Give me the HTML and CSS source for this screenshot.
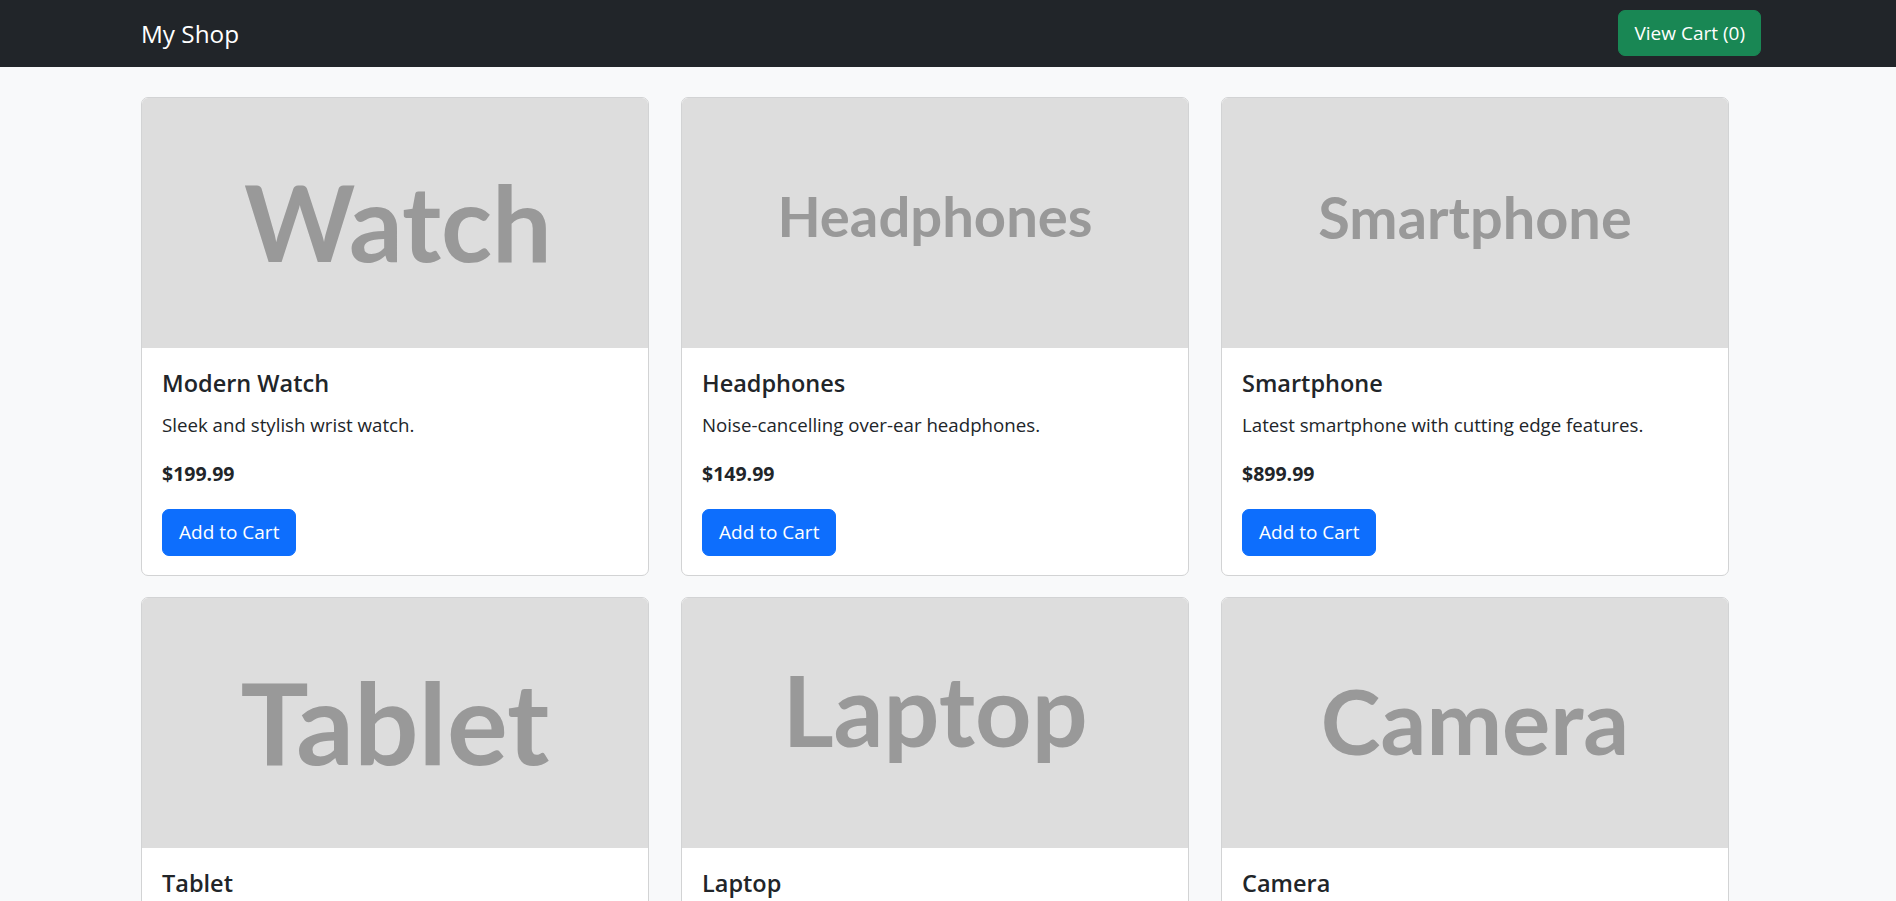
FILE: index.html
```html
<!DOCTYPE html>
<html lang="en">
<head>
<meta charset="utf-8">
<title>My Shop</title>
<link rel="stylesheet" href="styles.css">
</head>
<body>
<nav class="navbar">
  <div class="nav-inner">
    <a class="brand" href="#">My Shop</a>
    <button class="btn btn-cart">View Cart (0)</button>
  </div>
</nav>
<main class="shop">
  <div class="card">
    <div class="thumb"><span class="ph ph-watch">Watch</span></div>
    <div class="card-body">
      <h5 class="card-title">Modern Watch</h5>
      <p class="card-text">Sleek and stylish wrist watch.</p>
      <p class="price">$199.99</p>
      <button class="btn btn-add">Add to Cart</button>
    </div>
  </div>
  <div class="card">
    <div class="thumb"><span class="ph ph-headphones">Headphones</span></div>
    <div class="card-body">
      <h5 class="card-title">Headphones</h5>
      <p class="card-text">Noise-cancelling over-ear headphones.</p>
      <p class="price">$149.99</p>
      <button class="btn btn-add">Add to Cart</button>
    </div>
  </div>
  <div class="card">
    <div class="thumb"><span class="ph ph-smartphone">Smartphone</span></div>
    <div class="card-body">
      <h5 class="card-title">Smartphone</h5>
      <p class="card-text">Latest smartphone with cutting edge features.</p>
      <p class="price">$899.99</p>
      <button class="btn btn-add">Add to Cart</button>
    </div>
  </div>
  <div class="card">
    <div class="thumb"><span class="ph ph-tablet">Tablet</span></div>
    <div class="card-body">
      <h5 class="card-title">Tablet</h5>
      <p class="card-text">Portable tablet for work and play.</p>
      <p class="price">$499.99</p>
      <button class="btn btn-add">Add to Cart</button>
    </div>
  </div>
  <div class="card">
    <div class="thumb"><span class="ph ph-laptop">Laptop</span></div>
    <div class="card-body">
      <h5 class="card-title">Laptop</h5>
      <p class="card-text">Powerful laptop for everyday tasks.</p>
      <p class="price">$1299.99</p>
      <button class="btn btn-add">Add to Cart</button>
    </div>
  </div>
  <div class="card">
    <div class="thumb"><span class="ph ph-camera">Camera</span></div>
    <div class="card-body">
      <h5 class="card-title">Camera</h5>
      <p class="card-text">High resolution digital camera.</p>
      <p class="price">$649.99</p>
      <button class="btn btn-add">Add to Cart</button>
    </div>
  </div>
</main>
</body>
</html>
```
FILE: styles.css
```css
* { box-sizing: border-box; }

body {
  margin: 0;
  background: #f8f9fa;
  color: #212529;
  font-family: "Open Sans", "Noto Sans", sans-serif;
  font-size: 18.7px;
}

.navbar {
  background: #212529;
  height: 67px;
}

.nav-inner {
  height: 100%;
  display: flex;
  align-items: center;
  justify-content: space-between;
  padding: 0 135px 0 141px;
}

.brand {
  color: #fff;
  text-decoration: none;
  font-size: 24.3px;
  line-height: 30px;
}

.btn {
  font-family: inherit;
  border: 1px solid transparent;
  border-radius: 7px;
  color: #fff;
  font-size: 19px;
  line-height: 29px;
  cursor: pointer;
}

.btn-cart {
  background: #198754;
  border-color: #198754;
  height: 46px;
  padding: 0 15px;
  margin-top: -1px;
}

.shop {
  display: grid;
  grid-template-columns: repeat(3, 508px);
  column-gap: 32px;
  row-gap: 21px;
  padding: 30px 0 0 141px;
}

.card {
  background: #fff;
  border: 1px solid #d2d3d4;
  border-radius: 7px;
  overflow: hidden;
}

.thumb {
  height: 250px;
  background: #dddddd;
  display: flex;
  align-items: center;
  justify-content: center;
}

.ph {
  font-family: "Lato", sans-serif;
  font-weight: 700;
  color: #999999;
  line-height: 1;
}

.ph-watch { font-size: 106px; margin: 0 0 4px 6px; }
.ph-headphones { font-size: 56.2px; margin-bottom: 13px; }
.ph-smartphone { font-size: 57.7px; margin-bottom: 13px; }
.ph-tablet { font-size: 113.8px; margin-bottom: 2px; }
.ph-laptop { font-size: 98.5px; margin-bottom: 28px; }
.ph-camera { font-size: 90.3px; margin-bottom: 5px; }

.card-body {
  padding: 19px 20px 19px 20px;
}

.card-title {
  margin: 2px 0 0;
  font-size: 23.5px;
  font-weight: 600;
  line-height: 29px;
}

.card-text {
  margin: 12px 0 0;
  line-height: 29px;
}

.price {
  margin: 20px 0 0;
  font-size: 19.5px;
  font-weight: 700;
  line-height: 29px;
}

.btn-add {
  display: block;
  margin-top: 21px;
  background: #0d6efd;
  border-color: #0d6efd;
  height: 47px;
  padding: 0 16px;
}
```
